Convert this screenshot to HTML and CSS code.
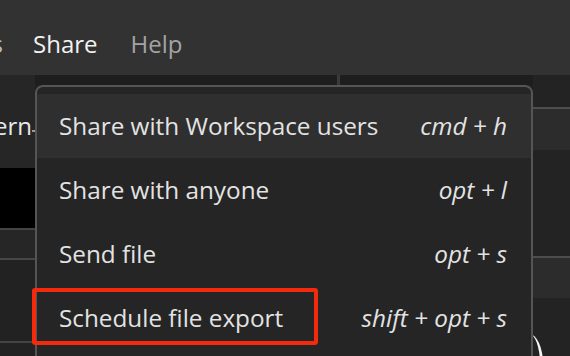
FILE: index.html
```html
<!DOCTYPE html>
<html>
<head>
<meta charset="utf-8">
<link rel="stylesheet" href="styles.css">
</head>
<body>
<div class="app">
  <header class="menubar">
    <span class="mb-item mb-cut">s</span>
    <span class="mb-item mb-active">Share</span>
    <span class="mb-item mb-dim">Help</span>
  </header>
  <main class="work">
    <aside class="left">
      <div class="l-row l-title"><span class="clip">Pattern</span><span class="dash"></span></div>
      <div class="l-black"></div>
      <div class="l-row l-mid"></div>
      <div class="l-row l-mid2"></div>
      <div class="l-row l-rest"></div>
    </aside>
    <section class="center">
      <div class="c-top"><span class="c-notch"></span></div>
    </section>
    <aside class="right">
      <div class="r-gap"></div>
      <div class="r-band"></div>
      <div class="r-fill"></div>
      <div class="r-band r-band2"></div>
      <div class="r-fill r-fill2"><span class="r-arc"></span></div>
    </aside>
    <nav class="menu">
      <div class="menu-row is-hover"><span class="label">Share with Workspace users</span><span class="kbd">cmd + h</span></div>
      <div class="menu-row"><span class="label">Share with anyone</span><span class="kbd">opt + l</span></div>
      <div class="menu-row"><span class="label">Send file</span><span class="kbd">opt + s</span></div>
      <div class="menu-row"><span class="label">Schedule file export</span><span class="kbd">shift + opt + s</span><span class="callout"></span></div>
    </nav>
  </main>
</div>
</body>
</html>
```
FILE: styles.css
```css
html, body {
  margin: 0;
  padding: 0;
  width: 570px;
  height: 356px;
  overflow: hidden;
  background: #232323;
  font-family: "Open Sans", "Noto Sans", sans-serif;
}
.app {
  display: flex;
  flex-direction: column;
  height: 356px;
}
.menubar {
  height: 75px;
  box-sizing: border-box;
  padding-top: 17px;
  background: #323232;
  display: flex;
  align-items: center;
  font-size: 24px;
  color: #f0f0f0;
  flex-shrink: 0;
  overflow: hidden;
}
.mb-item {
  line-height: 1;
  padding-bottom: 4px;
}
.mb-cut {
  display: inline-block;
  width: 3px;
  overflow: hidden;
  direction: rtl;
  color: #bdbdbd;
}
.mb-active {
  margin-left: 30px;
  color: #f2f2f2;
}
.mb-dim {
  margin-left: 33px;
  color: #a3a3a3;
}
.work {
  position: relative;
  flex: 1;
  display: flex;
  background: #1f1f1f;
}
.left {
  width: 35px;
  display: flex;
  flex-direction: column;
  padding-top: 10px;
  background: #262626;
}
.l-title {
  height: 83px;
  display: flex;
  align-items: center;
  justify-content: flex-end;
  position: relative;
  overflow: hidden;
  font-size: 24px;
  color: #e8e8e8;
}
.clip {
  white-space: nowrap;
  margin-right: 3px;
  padding-bottom: 2px;
}
.dash {
  position: absolute;
  right: 0;
  top: 45px;
  width: 3px;
  height: 2px;
  background: #9a9a9a;
}
.l-black {
  height: 60px;
  background: #000;
  border-bottom: 2px solid #444;
}
.l-mid {
  height: 28px;
  background: #262626;
  border-bottom: 2px solid #474747;
}
.l-mid2 {
  height: 81px;
  background: #222;
  border-bottom: 2px solid #444;
}
.l-rest {
  flex: 1;
  background: #222;
}
.center {
  flex: 1;
  display: flex;
  flex-direction: column;
  background: #202020;
}
.c-top {
  height: 10px;
  background: #1e1e1e;
  position: relative;
}
.c-notch {
  position: absolute;
  left: 302px;
  top: 0;
  width: 3px;
  height: 10px;
  background: #3a3a3a;
}
.right {
  width: 37px;
  display: flex;
  flex-direction: column;
  background: #232323;
}
.r-gap {
  height: 32px;
  background: #232323;
  border-bottom: 2px solid #4d4d4d;
}
.r-band {
  height: 41px;
  background: #2c2c2c;
}
.r-fill {
  height: 106px;
  background: #232323;
  border-bottom: 2px solid #4d4d4d;
}
.r-band2 {
  height: 40px;
}
.r-fill2 {
  flex: 1;
  height: auto;
  border-bottom: none;
  position: relative;
}
.r-arc {
  position: absolute;
  left: -18px;
  top: 36px;
  width: 28px;
  height: 60px;
  border-radius: 50%;
  border-right: 3px solid #f2f2f2;
  box-sizing: border-box;
}
.menu {
  position: absolute;
  left: 35px;
  top: 10px;
  width: 498px;
  height: 300px;
  box-sizing: border-box;
  border: 2px solid #555;
  border-radius: 8px;
  background: #252525;
  padding-top: 7px;
  display: flex;
  flex-direction: column;
  font-size: 24.3px;
}
.menu-row {
  position: relative;
  height: 64px;
  flex-shrink: 0;
  display: flex;
  align-items: center;
  justify-content: space-between;
  padding: 0 24px 0 22px;
  color: #e3e3e3;
}
.is-hover {
  background: #2f2f2f;
}
.label {
  padding-bottom: 2px;
}
.kbd {
  font-style: italic;
  padding-bottom: 2px;
}
.callout {
  position: absolute;
  left: -5px;
  top: 2px;
  width: 286px;
  height: 57px;
  box-sizing: border-box;
  border: 4px solid #f5290c;
  border-radius: 3px;
}
```
